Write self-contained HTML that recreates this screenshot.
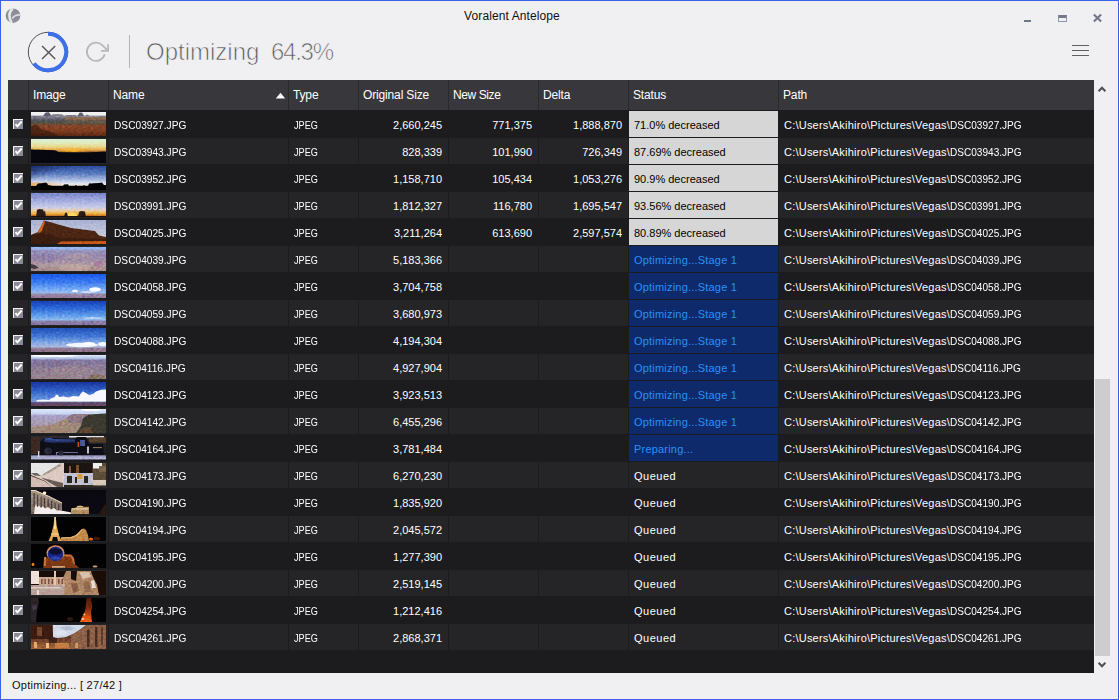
<!DOCTYPE html>
<html><head><meta charset="utf-8"><title>Voralent Antelope</title>
<style>
*{box-sizing:border-box;margin:0;padding:0}
html,body{width:1119px;height:700px;overflow:hidden;background:#f0f0f2;font-family:"Liberation Sans",sans-serif;font-size:12px;color:#000}
#win{position:absolute;left:0;top:0;width:1119px;height:700px;background:#f0f0f2}
#frame{position:absolute;left:0;top:0;width:1119px;height:700px;border:1px solid #3a62e8;pointer-events:none}
#title{position:absolute;left:0;width:1024px;top:9px;text-align:center;font-size:12px;color:#111;letter-spacing:0.1px}
#big{position:absolute;left:146px;top:37.5px;font-size:24px;color:#5a5a5a;white-space:pre;-webkit-text-stroke:0.7px #f0f0f2}
#sep{position:absolute;left:129px;top:35px;width:1px;height:33px;background:#b4b4b4}
#tbl{position:absolute;left:8px;top:80px;width:1086px;height:593px;background:#1c1c1e;overflow:hidden}
.h{position:absolute;left:0;top:0;height:30px;width:1086px;background:#38383c}
.h div{position:absolute;top:0;height:30px;line-height:30px;color:#fff;padding-left:4px;border-left:1px solid #2a2a2d;font-size:12px;letter-spacing:-0.15px;white-space:nowrap}
.r{position:absolute;left:0;width:1086px;height:27px}
.r.a{background:#1c1c1e}
.r.b{background:#252527;box-shadow:inset 0 1px 0 #1c1c1e}
.c{position:absolute;top:0;height:27px;line-height:30px;color:#fff;font-size:11px;white-space:nowrap;overflow:hidden}
.r.b .c{border-left:1px solid #1c1c1e}
.r.a .c{border-left:1px solid #1c1c1e}
.ck{left:0;width:20px;border-left:none!important}
.im{left:20px;width:80px}
.nm{left:100px;width:180px;padding-left:5px}
.nm i{display:inline-block;font-style:normal;transform:scaleX(0.925);transform-origin:0 50%}
.ty{left:280px;width:70px;padding-left:5px}
.ty i{display:inline-block;font-style:normal;transform:scaleX(0.83);transform-origin:0 50%}
.os{left:350px;width:90px;text-align:right;padding-right:6px}
.ns{left:440px;width:90px;text-align:right;padding-right:6px}
.dl{left:530px;width:90px;text-align:right;padding-right:6px}
.st{left:620px;width:150px}
.pa{left:770px;width:316px;padding-left:5px}
.pa b{font-weight:normal;letter-spacing:0.22px}
.pa i{display:inline-block;font-style:normal;transform:scaleX(0.915);transform-origin:0 50%}
.st span{position:absolute;left:0;top:1px;right:0;bottom:0;padding-left:4px;line-height:28px}
.st.done span{background:#d6d6d6;color:#000;padding-left:5px}
.st.run span{background:#0f2a6b;color:#2890f8;letter-spacing:0.2px;padding-left:5px}
.st.q span{color:#fff;letter-spacing:0.5px;padding-left:5px}
.cb{position:absolute;left:5px;top:9px;width:10px;height:10px;background:#8a8a96;border-left:1px solid #f4f4f4;border-top:1px solid #f4f4f4;display:block;line-height:0}
.cb svg{position:absolute;left:-1px;top:-1px}
.th{position:absolute;left:2px;top:2px;width:75px;height:24px;background:#555}
#status{position:absolute;left:12px;top:679px;font-size:11px;color:#111;letter-spacing:0.27px}
#sb{position:absolute;left:1095px;top:379px;width:15px;height:277px;background:#cdcdcd}
</style></head><body>
<svg width="0" height="0" style="position:absolute"><defs><filter id="nz" x="0" y="0" width="100%" height="100%" color-interpolation-filters="sRGB"><feTurbulence type="fractalNoise" baseFrequency="0.35 0.5" numOctaves="2" seed="7" result="t"/><feColorMatrix in="t" type="matrix" values="0.3 0.15 0.05 0 0.25  0.1 0.3 0.1 0 0.25  0.05 0.15 0.3 0 0.25  0 0 0 0 1" result="n"/><feBlend in="n" in2="SourceGraphic" mode="overlay" result="o"/><feComposite in="o" in2="SourceGraphic" operator="in"/></filter></defs></svg>
<div id="win">
<div id="title">Voralent Antelope</div>
<svg id="appicon" width="18" height="18" viewBox="0 0 18 18" style="position:absolute;left:4px;top:7px"><circle cx="9" cy="8.7" r="7.3" fill="#8e8e9a"/><path d="M8.6 1.4 C4.6 5 4.4 11 7.8 16" fill="none" stroke="#e6e6ea" stroke-width="2.7"/><path d="M8.2 11.5 C10 8.8 13 7.6 16.2 7.9" fill="none" stroke="#dcdce0" stroke-width="1.6"/></svg>
<svg id="cancel" width="46" height="46" viewBox="0 0 46 46" style="position:absolute;left:25.4px;top:28.5px"><circle cx="23" cy="23" r="19.7" fill="none" stroke="#555" stroke-width="1"/><path d="M23 4.8 A18.2 18.2 0 1 1 8.85 34.45" fill="none" stroke="#3f6fe8" stroke-width="4"/><path d="M17 16.9 L30.2 30.1 M30.2 16.9 L17 30.1" stroke="#555" stroke-width="1.4" fill="none"/></svg>
<svg id="refresh" width="30" height="30" viewBox="0 0 30 30" style="position:absolute;left:81px;top:37px"><path d="M23.75 17.26 A9.1 9.1 0 1 1 21.43 8.32 L26.6 13.4" fill="none" stroke="#b8b8b8" stroke-width="1.8"/><path d="M27.1 7.2 V13.85 H20" fill="none" stroke="#b8b8b8" stroke-width="1.8"/></svg>
<div style="position:absolute;left:1024px;top:20px;width:7px;height:2px;background:#707888"></div>
<div style="position:absolute;left:1058px;top:15px;width:9px;height:7px;border:1px solid #8c98b0;border-top:3px solid #77778a"></div>
<svg width="11" height="10" viewBox="0 0 11 10" style="position:absolute;left:1092px;top:13px"><path d="M1.9 1.4 L9.1 8.4 M9.1 1.4 L1.9 8.4" stroke="#74748a" stroke-width="2.1" fill="none"/></svg>
<div style="position:absolute;left:1072px;top:45px;width:17px;height:1px;background:#606060"></div>
<div style="position:absolute;left:1072px;top:50px;width:17px;height:1px;background:#606060"></div>
<div style="position:absolute;left:1072px;top:55px;width:17px;height:1px;background:#606060"></div>
<svg width="10" height="8" viewBox="0 0 10 8" style="position:absolute;left:1097px;top:85px"><path d="M1.6 6.3 L5 2.7 L8.4 6.3" stroke="#505050" stroke-width="2" fill="none"/></svg>
<svg width="10" height="8" viewBox="0 0 10 8" style="position:absolute;left:1097px;top:661px"><path d="M1.6 1.7 L5 5.3 L8.4 1.7" stroke="#505050" stroke-width="2" fill="none"/></svg>
<div id="sep"></div>
<div id="big"><span>Optimizing  </span><span style="position:absolute;left:125px;top:0;letter-spacing:-1.25px">64.3%</span></div>
<div id="tbl">
<div class="h"><div style="left:0;width:20px;border:none"></div><div style="left:20px;width:80px">Image</div><div style="left:100px;width:180px">Name</div><div style="left:280px;width:70px">Type</div><div style="left:350px;width:90px">Original Size</div><div style="left:440px;width:90px;letter-spacing:-0.4px">New Size</div><div style="left:530px;width:90px">Delta</div><div style="left:620px;width:150px">Status</div><div style="left:770px;width:316px">Path</div></div>
<svg width="11" height="7" viewBox="0 0 11 7" style="position:absolute;left:267px;top:12px"><polygon points="0.8,6.5 5.5,0.8 10.2,6.5" fill="#fff"/></svg>
<div id="rows" style="position:absolute;left:0;top:30px">
<div class="r a" style="top:0px"><div class="c ck"><span class="cb"><svg viewBox="0 0 11 11" width="11" height="11"><path d="M2.5 5.2 L4.4 7.4 L8.7 2.5" fill="none" stroke="#fff" stroke-width="1.9"/></svg></span></div><div class="c im"><svg class="th" viewBox="0 0 75 24" width="75" height="24"><defs><linearGradient id="g0" x1="0" y1="0" x2="0" y2="1"><stop offset="0" stop-color="#f2f2f2"/><stop offset="0.13" stop-color="#eeeeee"/><stop offset="0.17" stop-color="#8a8898"/><stop offset="0.26" stop-color="#6c6a78"/><stop offset="0.34" stop-color="#54565a"/><stop offset="0.44" stop-color="#505048"/><stop offset="0.5" stop-color="#6a4c38"/><stop offset="0.6" stop-color="#884428"/><stop offset="0.8" stop-color="#7c3c20"/><stop offset="1" stop-color="#5a2814"/></linearGradient></defs><g filter="url(#nz)"><rect x="0" y="0" width="75" height="24" fill="url(#g0)"/><polygon points="12,4 14.5,0.6 18,0.3 20.5,4" fill="#605c6c"/><polygon points="46.5,4 48.5,0.8 51,0.6 53,4" fill="#605c6c"/><polygon points="20,4 22,2.2 31,2.2 33,4" fill="#807c88"/><polygon points="54,4 56,2.4 59,4" fill="#807c88"/><polygon points="34,4 36,3 44,3 46,4" fill="#807c88"/><polygon points="0,14 6,12.5 10,17 20,20 28,24 0,24" fill="#2a140c" opacity="0.55"/><rect x="34" y="5" width="41" height="3.5" fill="#a06838" opacity="0.6"/><rect x="36" y="8.5" width="39" height="2.5" fill="#6a6048" opacity="0.5"/></g></svg></div><div class="c nm"><i>DSC03927.JPG</i></div><div class="c ty"><i>JPEG</i></div><div class="c os">2,660,245</div><div class="c ns">771,375</div><div class="c dl">1,888,870</div><div class="c st done"><span>71.0% decreased</span></div><div class="c pa"><b>C:\Users\Akihiro\Pictures\Vegas\</b><i>DSC03927.JPG</i></div></div>
<div class="r b" style="top:27px"><div class="c ck"><span class="cb"><svg viewBox="0 0 11 11" width="11" height="11"><path d="M2.5 5.2 L4.4 7.4 L8.7 2.5" fill="none" stroke="#fff" stroke-width="1.9"/></svg></span></div><div class="c im"><svg class="th" viewBox="0 0 75 24" width="75" height="24"><defs><linearGradient id="g1" x1="0" y1="0" x2="0" y2="1"><stop offset="0" stop-color="#d8f0d4"/><stop offset="0.15" stop-color="#e0ecc0"/><stop offset="0.32" stop-color="#e8d88c"/><stop offset="0.42" stop-color="#e8b858"/><stop offset="0.5" stop-color="#c88838"/><stop offset="0.56" stop-color="#503828"/><stop offset="0.6" stop-color="#08080f"/><stop offset="1" stop-color="#020206"/></linearGradient><radialGradient id="r1" cx="0.5" cy="0.5" r="0.5"><stop offset="0" stop-color="#ffb428"/><stop offset="1" stop-color="#ffb428" stop-opacity="0"/></radialGradient></defs><g filter="url(#nz)"><rect x="0" y="0" width="75" height="24" fill="url(#g1)"/><ellipse cx="42" cy="11.5" rx="17" ry="3" fill="url(#r1)"/><polygon points="0,10.5 10,10.8 24,11.3 28,13.3 56,13.5 75,12.5 75,24 0,24" fill="#07070f"/></g></svg></div><div class="c nm"><i>DSC03943.JPG</i></div><div class="c ty"><i>JPEG</i></div><div class="c os">828,339</div><div class="c ns">101,990</div><div class="c dl">726,349</div><div class="c st done"><span>87.69% decreased</span></div><div class="c pa"><b>C:\Users\Akihiro\Pictures\Vegas\</b><i>DSC03943.JPG</i></div></div>
<div class="r a" style="top:54px"><div class="c ck"><span class="cb"><svg viewBox="0 0 11 11" width="11" height="11"><path d="M2.5 5.2 L4.4 7.4 L8.7 2.5" fill="none" stroke="#fff" stroke-width="1.9"/></svg></span></div><div class="c im"><svg class="th" viewBox="0 0 75 24" width="75" height="24"><defs><linearGradient id="g2" x1="0" y1="0" x2="0" y2="1"><stop offset="0" stop-color="#2c4c9e"/><stop offset="0.3" stop-color="#5678bc"/><stop offset="0.55" stop-color="#a0b4dc"/><stop offset="0.72" stop-color="#dfe4f0"/><stop offset="0.8" stop-color="#efe4d4"/><stop offset="0.85" stop-color="#000"/><stop offset="1" stop-color="#000"/></linearGradient><linearGradient id="g2b" x1="0" y1="0" x2="1" y2="0.7"><stop offset="0" stop-color="#10184aaa"/><stop offset="0.4" stop-color="#10184a00"/></linearGradient><linearGradient id="g2c" x1="0" y1="0" x2="1" y2="0"><stop offset="0" stop-color="#e8a050"/><stop offset="1" stop-color="#e8a05000"/></linearGradient></defs><g filter="url(#nz)"><rect x="0" y="0" width="75" height="24" fill="url(#g2)"/><rect x="0" y="0" width="75" height="18" fill="url(#g2b)"/><rect x="0" y="16.5" width="32" height="3.5" fill="url(#g2c)" opacity="0.8"/><polygon points="0,20 5,20 7,17.5 13,17 14,16.5 16,17 17,19 22,20 32,20 33,18.5 37,18.3 38,20 44,20 45,19 46,20 52,20 53,19 54,20 57,20 58,17.5 68,17 71,16.5 73,19 75,19 75,24 0,24" fill="#000"/></g></svg></div><div class="c nm"><i>DSC03952.JPG</i></div><div class="c ty"><i>JPEG</i></div><div class="c os">1,158,710</div><div class="c ns">105,434</div><div class="c dl">1,053,276</div><div class="c st done"><span>90.9% decreased</span></div><div class="c pa"><b>C:\Users\Akihiro\Pictures\Vegas\</b><i>DSC03952.JPG</i></div></div>
<div class="r b" style="top:81px"><div class="c ck"><span class="cb"><svg viewBox="0 0 11 11" width="11" height="11"><path d="M2.5 5.2 L4.4 7.4 L8.7 2.5" fill="none" stroke="#fff" stroke-width="1.9"/></svg></span></div><div class="c im"><svg class="th" viewBox="0 0 75 24" width="75" height="24"><defs><linearGradient id="g3" x1="0" y1="0" x2="0" y2="1"><stop offset="0" stop-color="#7884c8"/><stop offset="0.35" stop-color="#a8b0e0"/><stop offset="0.6" stop-color="#c8cce8"/><stop offset="0.72" stop-color="#e8d0b0"/><stop offset="0.86" stop-color="#f0b040"/><stop offset="0.95" stop-color="#c07020"/><stop offset="1" stop-color="#301810"/></linearGradient></defs><g filter="url(#nz)"><rect x="0" y="0" width="75" height="24" fill="url(#g3)"/><ellipse cx="40" cy="22" rx="6" ry="2.5" fill="#ffd860"/><polygon points="5,24 6,17 8,16 12,16.5 13,19 14,17.5 15,24" fill="#2a1a18"/><polygon points="33,24 34,20 36,19.5 37,24" fill="#2a1a18"/><polygon points="47,24 48,19 50,18 54,18.5 55,24" fill="#2a1a18"/><rect x="0" y="23" width="75" height="1" fill="#20100c"/></g></svg></div><div class="c nm"><i>DSC03991.JPG</i></div><div class="c ty"><i>JPEG</i></div><div class="c os">1,812,327</div><div class="c ns">116,780</div><div class="c dl">1,695,547</div><div class="c st done"><span>93.56% decreased</span></div><div class="c pa"><b>C:\Users\Akihiro\Pictures\Vegas\</b><i>DSC03991.JPG</i></div></div>
<div class="r a" style="top:108px"><div class="c ck"><span class="cb"><svg viewBox="0 0 11 11" width="11" height="11"><path d="M2.5 5.2 L4.4 7.4 L8.7 2.5" fill="none" stroke="#fff" stroke-width="1.9"/></svg></span></div><div class="c im"><svg class="th" viewBox="0 0 75 24" width="75" height="24"><defs><linearGradient id="g4" x1="0" y1="0" x2="0" y2="1"><stop offset="0" stop-color="#a8b0d4"/><stop offset="1" stop-color="#d8d8e0"/></linearGradient></defs><g filter="url(#nz)"><rect x="0" y="0" width="75" height="24" fill="url(#g4)"/><polygon points="0,15 7,12 13,0.5 15,1 40,8 64,11 68,15.5 75,17 75,24 0,24" fill="#4c2614"/><polygon points="7,12 13,0.5 14,2 11,11 8,13" fill="#d0601c"/><polygon points="0,15 12,13 30,18 75,19 75,24 0,24" fill="#2e160c" opacity="0.55"/><polygon points="26,24 30,21.5 75,21 75,24" fill="#c85818"/></g></svg></div><div class="c nm"><i>DSC04025.JPG</i></div><div class="c ty"><i>JPEG</i></div><div class="c os">3,211,264</div><div class="c ns">613,690</div><div class="c dl">2,597,574</div><div class="c st done"><span>80.89% decreased</span></div><div class="c pa"><b>C:\Users\Akihiro\Pictures\Vegas\</b><i>DSC04025.JPG</i></div></div>
<div class="r b" style="top:135px"><div class="c ck"><span class="cb"><svg viewBox="0 0 11 11" width="11" height="11"><path d="M2.5 5.2 L4.4 7.4 L8.7 2.5" fill="none" stroke="#fff" stroke-width="1.9"/></svg></span></div><div class="c im"><svg class="th" viewBox="0 0 75 24" width="75" height="24"><defs><linearGradient id="g5" x1="0" y1="0" x2="0" y2="1"><stop offset="0" stop-color="#8cb4f4"/><stop offset="0.08" stop-color="#9cb4ec"/><stop offset="0.16" stop-color="#9490b8"/><stop offset="0.45" stop-color="#9888a8"/><stop offset="0.75" stop-color="#b09aa0"/><stop offset="1" stop-color="#a48a88"/></linearGradient></defs><g filter="url(#nz)"><rect x="0" y="0" width="75" height="24" fill="url(#g5)"/><ellipse cx="44" cy="21" rx="16" ry="4" fill="#c4aca4" opacity="0.6"/><ellipse cx="14" cy="11" rx="12" ry="5" fill="#8474a4" opacity="0.4"/><ellipse cx="48" cy="9" rx="14" ry="3" fill="#c4a8a8" opacity="0.35"/><ellipse cx="68" cy="17" rx="5" ry="3" fill="#a85c98" opacity="0.4"/><polygon points="0,17 4,18 8,21 3,22 0,21" fill="#18101c" opacity="0.7"/></g></svg></div><div class="c nm"><i>DSC04039.JPG</i></div><div class="c ty"><i>JPEG</i></div><div class="c os">5,183,366</div><div class="c ns"></div><div class="c dl"></div><div class="c st run"><span>Optimizing...Stage 1</span></div><div class="c pa"><b>C:\Users\Akihiro\Pictures\Vegas\</b><i>DSC04039.JPG</i></div></div>
<div class="r a" style="top:162px"><div class="c ck"><span class="cb"><svg viewBox="0 0 11 11" width="11" height="11"><path d="M2.5 5.2 L4.4 7.4 L8.7 2.5" fill="none" stroke="#fff" stroke-width="1.9"/></svg></span></div><div class="c im"><svg class="th" viewBox="0 0 75 24" width="75" height="24"><defs><linearGradient id="g6" x1="0" y1="0" x2="0" y2="1"><stop offset="0" stop-color="#1858ec"/><stop offset="0.35" stop-color="#3c7cf0"/><stop offset="0.65" stop-color="#78acf4"/><stop offset="0.78" stop-color="#98b8ec"/><stop offset="0.84" stop-color="#9888a8"/><stop offset="1" stop-color="#907898"/></linearGradient></defs><g filter="url(#nz)"><rect x="0" y="0" width="75" height="24" fill="url(#g6)"/><ellipse cx="64" cy="15.5" rx="6" ry="2.2" fill="#fff"/><ellipse cx="44" cy="17" rx="3" ry="1.2" fill="#f0f4ff"/><ellipse cx="57" cy="18" rx="8" ry="1.2" fill="#e0e8f8" opacity="0.7"/></g></svg></div><div class="c nm"><i>DSC04058.JPG</i></div><div class="c ty"><i>JPEG</i></div><div class="c os">3,704,758</div><div class="c ns"></div><div class="c dl"></div><div class="c st run"><span>Optimizing...Stage 1</span></div><div class="c pa"><b>C:\Users\Akihiro\Pictures\Vegas\</b><i>DSC04058.JPG</i></div></div>
<div class="r b" style="top:189px"><div class="c ck"><span class="cb"><svg viewBox="0 0 11 11" width="11" height="11"><path d="M2.5 5.2 L4.4 7.4 L8.7 2.5" fill="none" stroke="#fff" stroke-width="1.9"/></svg></span></div><div class="c im"><svg class="th" viewBox="0 0 75 24" width="75" height="24"><defs><linearGradient id="g7" x1="0" y1="0" x2="0" y2="1"><stop offset="0" stop-color="#1840b8"/><stop offset="0.3" stop-color="#2c68d8"/><stop offset="0.65" stop-color="#68a4ec"/><stop offset="0.78" stop-color="#90b8ec"/><stop offset="0.85" stop-color="#8880a8"/><stop offset="1" stop-color="#8874a0"/></linearGradient></defs><g filter="url(#nz)"><rect x="0" y="0" width="75" height="24" fill="url(#g7)"/><ellipse cx="62" cy="17" rx="10" ry="1" fill="#d8e4f8" opacity="0.6"/></g></svg></div><div class="c nm"><i>DSC04059.JPG</i></div><div class="c ty"><i>JPEG</i></div><div class="c os">3,680,973</div><div class="c ns"></div><div class="c dl"></div><div class="c st run"><span>Optimizing...Stage 1</span></div><div class="c pa"><b>C:\Users\Akihiro\Pictures\Vegas\</b><i>DSC04059.JPG</i></div></div>
<div class="r a" style="top:216px"><div class="c ck"><span class="cb"><svg viewBox="0 0 11 11" width="11" height="11"><path d="M2.5 5.2 L4.4 7.4 L8.7 2.5" fill="none" stroke="#fff" stroke-width="1.9"/></svg></span></div><div class="c im"><svg class="th" viewBox="0 0 75 24" width="75" height="24"><defs><linearGradient id="g8" x1="0" y1="0" x2="0" y2="1"><stop offset="0" stop-color="#2050b8"/><stop offset="0.35" stop-color="#4478d4"/><stop offset="0.6" stop-color="#80a8e4"/><stop offset="0.78" stop-color="#a8b8e0"/><stop offset="0.86" stop-color="#907890"/><stop offset="1" stop-color="#8c7088"/></linearGradient></defs><g filter="url(#nz)"><rect x="0" y="0" width="75" height="24" fill="url(#g8)"/><ellipse cx="51" cy="17" rx="16" ry="2.2" fill="#f4f6ff"/><ellipse cx="58" cy="15.5" rx="6" ry="1.5" fill="#fff"/><ellipse cx="72" cy="16" rx="5" ry="2" fill="#f4f6ff"/></g></svg></div><div class="c nm"><i>DSC04088.JPG</i></div><div class="c ty"><i>JPEG</i></div><div class="c os">4,194,304</div><div class="c ns"></div><div class="c dl"></div><div class="c st run"><span>Optimizing...Stage 1</span></div><div class="c pa"><b>C:\Users\Akihiro\Pictures\Vegas\</b><i>DSC04088.JPG</i></div></div>
<div class="r b" style="top:243px"><div class="c ck"><span class="cb"><svg viewBox="0 0 11 11" width="11" height="11"><path d="M2.5 5.2 L4.4 7.4 L8.7 2.5" fill="none" stroke="#fff" stroke-width="1.9"/></svg></span></div><div class="c im"><svg class="th" viewBox="0 0 75 24" width="75" height="24"><defs><linearGradient id="g9" x1="0" y1="0" x2="0" y2="1"><stop offset="0" stop-color="#e0e8f6"/><stop offset="0.08" stop-color="#c8d6f0"/><stop offset="0.16" stop-color="#a8b8e0"/><stop offset="0.21" stop-color="#8478a0"/><stop offset="0.5" stop-color="#8c7c98"/><stop offset="1" stop-color="#98848c"/></linearGradient></defs><g filter="url(#nz)"><rect x="0" y="0" width="75" height="24" fill="url(#g9)"/><ellipse cx="22" cy="0.8" rx="24" ry="1.3" fill="#fff" opacity="0.85"/><ellipse cx="40" cy="15" rx="22" ry="4" fill="#a89090" opacity="0.35"/><ellipse cx="20" cy="9" rx="18" ry="3" fill="#706088" opacity="0.3"/><ellipse cx="66" cy="22.5" rx="8" ry="3" fill="#7c6c50" opacity="0.7"/></g></svg></div><div class="c nm"><i>DSC04116.JPG</i></div><div class="c ty"><i>JPEG</i></div><div class="c os">4,927,904</div><div class="c ns"></div><div class="c dl"></div><div class="c st run"><span>Optimizing...Stage 1</span></div><div class="c pa"><b>C:\Users\Akihiro\Pictures\Vegas\</b><i>DSC04116.JPG</i></div></div>
<div class="r a" style="top:270px"><div class="c ck"><span class="cb"><svg viewBox="0 0 11 11" width="11" height="11"><path d="M2.5 5.2 L4.4 7.4 L8.7 2.5" fill="none" stroke="#fff" stroke-width="1.9"/></svg></span></div><div class="c im"><svg class="th" viewBox="0 0 75 24" width="75" height="24"><defs><linearGradient id="g10" x1="0" y1="0" x2="0" y2="1"><stop offset="0" stop-color="#1834a0"/><stop offset="0.4" stop-color="#3464c8"/><stop offset="0.75" stop-color="#6c98e0"/><stop offset="0.83" stop-color="#8090c0"/><stop offset="0.86" stop-color="#5c4868"/><stop offset="1" stop-color="#684864"/></linearGradient></defs><g filter="url(#nz)"><rect x="0" y="0" width="75" height="24" fill="url(#g10)"/><polygon points="5,19.5 6,18 12,17.5 18,18 20,16.5 24,15 25,12.5 27,13 28,15 32,14.5 38,15.5 42,14 48,14.5 50,11 52,9.5 55,11 58,13 62,12 65,9.5 70,7.8 75,7.5 75,19.5" fill="#f8f8ff"/></g></svg></div><div class="c nm"><i>DSC04123.JPG</i></div><div class="c ty"><i>JPEG</i></div><div class="c os">3,923,513</div><div class="c ns"></div><div class="c dl"></div><div class="c st run"><span>Optimizing...Stage 1</span></div><div class="c pa"><b>C:\Users\Akihiro\Pictures\Vegas\</b><i>DSC04123.JPG</i></div></div>
<div class="r b" style="top:297px"><div class="c ck"><span class="cb"><svg viewBox="0 0 11 11" width="11" height="11"><path d="M2.5 5.2 L4.4 7.4 L8.7 2.5" fill="none" stroke="#fff" stroke-width="1.9"/></svg></span></div><div class="c im"><svg class="th" viewBox="0 0 75 24" width="75" height="24"><defs><linearGradient id="g11" x1="0" y1="0" x2="0" y2="1"><stop offset="0" stop-color="#dce8fa"/><stop offset="0.2" stop-color="#c8d4f0"/><stop offset="0.27" stop-color="#a8a0c8"/><stop offset="0.6" stop-color="#a89cb0"/><stop offset="1" stop-color="#a08878"/></linearGradient></defs><g filter="url(#nz)"><rect x="0" y="0" width="75" height="24" fill="url(#g11)"/><ellipse cx="60" cy="0.8" rx="10" ry="1.3" fill="#fff"/><polygon points="0,19 20,16 34,10 40,6 58,5 60,24 0,24" fill="#a08878"/><polygon points="36,9 42,5 56,5 52,14 38,14" fill="#8a7488" opacity="0.8"/><polygon points="45,24 50,17 52,9 58,5.5 75,4.5 75,24" fill="#3c3a30"/><polygon points="48,24 52,19 60,18 62,24" fill="#705038" opacity="0.7"/></g></svg></div><div class="c nm"><i>DSC04142.JPG</i></div><div class="c ty"><i>JPEG</i></div><div class="c os">6,455,296</div><div class="c ns"></div><div class="c dl"></div><div class="c st run"><span>Optimizing...Stage 1</span></div><div class="c pa"><b>C:\Users\Akihiro\Pictures\Vegas\</b><i>DSC04142.JPG</i></div></div>
<div class="r a" style="top:324px"><div class="c ck"><span class="cb"><svg viewBox="0 0 11 11" width="11" height="11"><path d="M2.5 5.2 L4.4 7.4 L8.7 2.5" fill="none" stroke="#fff" stroke-width="1.9"/></svg></span></div><div class="c im"><svg class="th" viewBox="0 0 75 24" width="75" height="24"><defs><linearGradient id="g12" x1="0" y1="0" x2="0" y2="1"><stop offset="0" stop-color="#2c2830"/><stop offset="0.78" stop-color="#1c1a22"/><stop offset="0.83" stop-color="#9c9cc0"/><stop offset="0.94" stop-color="#b4b4d4"/><stop offset="1" stop-color="#303040"/></linearGradient><linearGradient id="g12b" x1="0" y1="0" x2="0" y2="1"><stop offset="0" stop-color="#4468c0"/><stop offset="1" stop-color="#1c2450"/></linearGradient></defs><g filter="url(#nz)"><rect x="0" y="0" width="75" height="24" fill="url(#g12)"/><rect x="38" y="0" width="35" height="1.5" fill="#e4e4ec"/><rect x="58" y="1.5" width="17" height="5" fill="#54402c"/><rect x="0" y="1" width="9" height="17" fill="#3c2a22"/><polygon points="9,19 9,6 12,3 20,2 44,3 46,1 55,1 58,8 72,8 73,19" fill="#0e0e16"/><polygon points="13,6 14,2.5 21,1.8 22,3 44,3.5 44,6.5 22,7" fill="url(#g12b)" opacity="0.9"/><rect x="46.5" y="6" width="1.8" height="5" fill="#c04818"/><rect x="49" y="4" width="5" height="6" fill="#5868b0" opacity="0.8"/><rect x="56.2" y="10.5" width="1.6" height="7" fill="#ececf4"/><rect x="62" y="11.2" width="9" height="0.9" fill="#a89060"/><rect x="7" y="15" width="1.3" height="6" fill="#d8d8e8"/><rect x="25" y="16" width="22" height="0.9" fill="#7c7ca4"/><rect x="25" y="16" width="0.9" height="4" fill="#7c7ca4"/><ellipse cx="17" cy="15" rx="4" ry="3.5" fill="#282838"/><ellipse cx="30" cy="17" rx="2.5" ry="2.5" fill="#282838"/></g></svg></div><div class="c nm"><i>DSC04164.JPG</i></div><div class="c ty"><i>JPEG</i></div><div class="c os">3,781,484</div><div class="c ns"></div><div class="c dl"></div><div class="c st run"><span>Preparing...</span></div><div class="c pa"><b>C:\Users\Akihiro\Pictures\Vegas\</b><i>DSC04164.JPG</i></div></div>
<div class="r b" style="top:351px"><div class="c ck"><span class="cb"><svg viewBox="0 0 11 11" width="11" height="11"><path d="M2.5 5.2 L4.4 7.4 L8.7 2.5" fill="none" stroke="#fff" stroke-width="1.9"/></svg></span></div><div class="c im"><svg class="th" viewBox="0 0 75 24" width="75" height="24"><defs></defs><g filter="url(#nz)"><rect x="0" y="0" width="75" height="24" fill="#3a3028"/><polygon points="0,0 30,0 10,13 0,11" fill="#e6e6e6"/><polygon points="30,0 33,0 33,24 21,24 14,18 0,12 0,10.5 10,13" fill="#dccac2"/><polygon points="0,13 14,18.5 21,24 0,24" fill="#d4bcb4"/><polygon points="0,10 6,10 10,13 4,12.5" fill="#4a4048" opacity="0.8"/><polygon points="10,14.5 32,20 32,24 26,24" fill="#2a201c" opacity="0.65"/><polygon points="12,11 30,1 30,3 14,12" fill="#8a7468" opacity="0.6"/><rect x="33" y="0" width="28" height="10" fill="#1c1410"/><rect x="45" y="2" width="3" height="8" fill="#7c4c28"/><rect x="38" y="3" width="2" height="7" fill="#7c5c40"/><rect x="33" y="10" width="29" height="12" fill="#c0c0d0"/><rect x="36" y="13" width="5" height="7" fill="#2c2420"/><rect x="44" y="14" width="2" height="6" fill="#2c2420"/><rect x="53" y="13" width="4" height="7" fill="#2c2420"/><rect x="46.5" y="11" width="5" height="5" fill="#d8a040"/><rect x="62" y="0" width="13" height="17" fill="#5c4c38"/><rect x="62" y="0" width="9" height="5.5" fill="#f0f0f0"/><rect x="68" y="3" width="7" height="6" fill="#7c6850"/><rect x="62" y="17" width="13" height="6" fill="#d8c8b8"/><rect x="33" y="22" width="42" height="2" fill="#2c2420" opacity="0.6"/></g></svg></div><div class="c nm"><i>DSC04173.JPG</i></div><div class="c ty"><i>JPEG</i></div><div class="c os">6,270,230</div><div class="c ns"></div><div class="c dl"></div><div class="c st q"><span>Queued</span></div><div class="c pa"><b>C:\Users\Akihiro\Pictures\Vegas\</b><i>DSC04173.JPG</i></div></div>
<div class="r a" style="top:378px"><div class="c ck"><span class="cb"><svg viewBox="0 0 11 11" width="11" height="11"><path d="M2.5 5.2 L4.4 7.4 L8.7 2.5" fill="none" stroke="#fff" stroke-width="1.9"/></svg></span></div><div class="c im"><svg class="th" viewBox="0 0 75 24" width="75" height="24"><defs><linearGradient id="g14" x1="0" y1="0" x2="0" y2="1"><stop offset="0" stop-color="#0a0810"/><stop offset="1" stop-color="#0c0a12"/></linearGradient><linearGradient id="g14b" x1="0" y1="0" x2="0" y2="1"><stop offset="0" stop-color="#a89888"/><stop offset="1" stop-color="#786860"/></linearGradient></defs><g filter="url(#nz)"><rect x="0" y="0" width="75" height="24" fill="url(#g14)"/><polygon points="0,0 4,0 18,6 31,12.5 31,24 0,24" fill="url(#g14b)"/><polygon points="0,0 4,0 18,6 31,12.5 31,13.5 18,7 4,1 0,1" fill="#e8d8c0"/><rect x="2.5" y="3" width="1.2" height="14" fill="#4a3c38"/><rect x="6" y="5" width="1.2" height="12" fill="#4a3c38"/><rect x="9.5" y="6.5" width="1.2" height="11" fill="#4a3c38"/><rect x="13" y="8" width="1.2" height="10" fill="#4a3c38"/><rect x="16.5" y="9.5" width="1.2" height="9" fill="#4a3c38"/><rect x="20" y="11" width="1.2" height="8" fill="#4a3c38"/><rect x="23.5" y="12.5" width="1.2" height="7" fill="#4a3c38"/><rect x="27" y="14" width="1.2" height="6" fill="#4a3c38"/><ellipse cx="13.5" cy="3" rx="1.8" ry="1.4" fill="#fff0d0"/><polygon points="3,24 4,17 5,14 6,17 8,15.5 10,18 12,16 14,18.5 17,17 20,19.5 23,18 26,20.5 30,20.5 38,22 46,24" fill="#f4ecec"/><polygon points="40,24 40,18.5 45,17.5 47,15.8 50,15.5 52,16.8 58,16.8 58,24" fill="#b08c60"/><rect x="41" y="18.5" width="16" height="0.9" fill="#fff0c0"/><rect x="46" y="16.2" width="6" height="0.8" fill="#e8c890"/><polygon points="68,24 75,13 75,24" fill="#2a1810"/></g></svg></div><div class="c nm"><i>DSC04190.JPG</i></div><div class="c ty"><i>JPEG</i></div><div class="c os">1,835,920</div><div class="c ns"></div><div class="c dl"></div><div class="c st q"><span>Queued</span></div><div class="c pa"><b>C:\Users\Akihiro\Pictures\Vegas\</b><i>DSC04190.JPG</i></div></div>
<div class="r b" style="top:405px"><div class="c ck"><span class="cb"><svg viewBox="0 0 11 11" width="11" height="11"><path d="M2.5 5.2 L4.4 7.4 L8.7 2.5" fill="none" stroke="#fff" stroke-width="1.9"/></svg></span></div><div class="c im"><svg class="th" viewBox="0 0 75 24" width="75" height="24"><defs></defs><g filter="url(#nz)"><rect x="0" y="0" width="75" height="24" fill="#020202"/><polygon points="23.4,0 24.8,0 25.6,8 27,14 27.5,17 30.5,24 17.5,24 20.5,17 21,14 22.6,8" fill="#e0a858"/><polygon points="23.7,0 24.5,0 25.2,12 23,12" fill="#f8dc98"/><polygon points="22,20 26,20 27,24 21,24" fill="#020202"/><rect x="20" y="16.5" width="8" height="1" fill="#f8dc98"/><polygon points="30,24 30,20.5 40,20 45,18 49,14 51,12 53,11.5 55,13 57,18 58,24" fill="#c08848"/><polygon points="30,20.5 40,20 45,18 49,14 51,12 51.6,12.8 49.6,15 45.5,19 40,21 30,21.5" fill="#e8c080"/><ellipse cx="60" cy="22" rx="2" ry="1.6" fill="#f07010"/><ellipse cx="66" cy="21.5" rx="3" ry="1.8" fill="#702808" opacity="0.6"/></g></svg></div><div class="c nm"><i>DSC04194.JPG</i></div><div class="c ty"><i>JPEG</i></div><div class="c os">2,045,572</div><div class="c ns"></div><div class="c dl"></div><div class="c st q"><span>Queued</span></div><div class="c pa"><b>C:\Users\Akihiro\Pictures\Vegas\</b><i>DSC04194.JPG</i></div></div>
<div class="r a" style="top:432px"><div class="c ck"><span class="cb"><svg viewBox="0 0 11 11" width="11" height="11"><path d="M2.5 5.2 L4.4 7.4 L8.7 2.5" fill="none" stroke="#fff" stroke-width="1.9"/></svg></span></div><div class="c im"><svg class="th" viewBox="0 0 75 24" width="75" height="24"><defs></defs><g filter="url(#nz)"><rect x="0" y="0" width="75" height="24" fill="#030202"/><polygon points="12,24 13,14 18,13 33,11 42,13 44,20 48,24" fill="#7c3814"/><polygon points="32,10.5 40,10.5 43,14 44,20 42.5,20 40,13 32,12" fill="#c87038"/><rect x="13" y="13" width="2" height="9" fill="#c87038"/><ellipse cx="24.5" cy="9" rx="9" ry="7.8" fill="#d89060"/><ellipse cx="24.5" cy="10" rx="7.8" ry="7.2" fill="#1a2888"/><ellipse cx="24.5" cy="7.5" rx="6.6" ry="3.2" fill="#0c1030"/><ellipse cx="24.5" cy="14" rx="5" ry="1.5" fill="#3850c0" opacity="0.7"/><rect x="21" y="22.3" width="13" height="1.2" fill="#f0d8b0"/><ellipse cx="2" cy="20.5" rx="1.4" ry="1.4" fill="#f08020"/><ellipse cx="64" cy="22.5" rx="2.5" ry="0.9" fill="#c8a080"/></g></svg></div><div class="c nm"><i>DSC04195.JPG</i></div><div class="c ty"><i>JPEG</i></div><div class="c os">1,277,390</div><div class="c ns"></div><div class="c dl"></div><div class="c st q"><span>Queued</span></div><div class="c pa"><b>C:\Users\Akihiro\Pictures\Vegas\</b><i>DSC04195.JPG</i></div></div>
<div class="r b" style="top:459px"><div class="c ck"><span class="cb"><svg viewBox="0 0 11 11" width="11" height="11"><path d="M2.5 5.2 L4.4 7.4 L8.7 2.5" fill="none" stroke="#fff" stroke-width="1.9"/></svg></span></div><div class="c im"><svg class="th" viewBox="0 0 75 24" width="75" height="24"><defs></defs><g filter="url(#nz)"><rect x="0" y="0" width="75" height="24" fill="#1a0c08"/><rect x="0" y="0" width="8" height="13" fill="#f0e0d8"/><rect x="8" y="6" width="30" height="8.5" fill="#c8a48c"/><rect x="10" y="8" width="1.5" height="5" fill="#7c5040"/><rect x="13.5" y="8" width="1.5" height="5" fill="#7c5040"/><rect x="17" y="8" width="1.5" height="5" fill="#7c5040"/><rect x="20.5" y="8" width="1.5" height="5" fill="#7c5040"/><rect x="27" y="8" width="1.5" height="5" fill="#7c5040"/><rect x="30.5" y="8" width="1.5" height="5" fill="#7c5040"/><rect x="23" y="0" width="2" height="14" fill="#e0c4b0"/><rect x="0" y="14" width="36" height="10" fill="#b8a098"/><rect x="0" y="16" width="30" height="1.5" fill="#dcccc4"/><rect x="6" y="19" width="2" height="5" fill="#e8dcd8"/><polygon points="33,24 34,14 32,7 35,0 40,0 40,8 45,10 46,0 60,0 62,6 66,14 68,24" fill="#b08868"/><polygon points="48,1 58,1 60,6 52,8" fill="#d8c0a8"/><polygon points="60,10 63,9 65,17 61,17" fill="#e8dcd4"/><polygon points="40,12 46,12 48,20 42,22" fill="#6a3c24" opacity="0.55"/><polygon points="52,12 58,10 60,20 54,22" fill="#6a3c24" opacity="0.4"/></g></svg></div><div class="c nm"><i>DSC04200.JPG</i></div><div class="c ty"><i>JPEG</i></div><div class="c os">2,519,145</div><div class="c ns"></div><div class="c dl"></div><div class="c st q"><span>Queued</span></div><div class="c pa"><b>C:\Users\Akihiro\Pictures\Vegas\</b><i>DSC04200.JPG</i></div></div>
<div class="r a" style="top:486px"><div class="c ck"><span class="cb"><svg viewBox="0 0 11 11" width="11" height="11"><path d="M2.5 5.2 L4.4 7.4 L8.7 2.5" fill="none" stroke="#fff" stroke-width="1.9"/></svg></span></div><div class="c im"><svg class="th" viewBox="0 0 75 24" width="75" height="24"><defs><linearGradient id="r18" x1="0" y1="0" x2="0" y2="1"><stop offset="0" stop-color="#501806"/><stop offset="0.5" stop-color="#8c300c"/><stop offset="0.8" stop-color="#e05010"/><stop offset="1" stop-color="#f06818"/></linearGradient></defs><g filter="url(#nz)"><rect x="0" y="0" width="75" height="24" fill="#020101"/><polygon points="0,0 7,0 8,4 6,12 5,24 0,24" fill="#2c2428"/><polygon points="1,8 5,6 6,10 2,13" fill="#5c5464" opacity="0.5"/><polygon points="49,24 51,19 54,13 55,6 55.5,0 60,0 61,8 60,15 61,24" fill="url(#r18)"/><ellipse cx="52" cy="21" rx="1.4" ry="1.1" fill="#ffd0a0"/><ellipse cx="53.5" cy="16.5" rx="1" ry="0.9" fill="#ffc080"/><ellipse cx="39" cy="21" rx="3" ry="2" fill="#30180c"/></g></svg></div><div class="c nm"><i>DSC04254.JPG</i></div><div class="c ty"><i>JPEG</i></div><div class="c os">1,212,416</div><div class="c ns"></div><div class="c dl"></div><div class="c st q"><span>Queued</span></div><div class="c pa"><b>C:\Users\Akihiro\Pictures\Vegas\</b><i>DSC04254.JPG</i></div></div>
<div class="r b" style="top:513px"><div class="c ck"><span class="cb"><svg viewBox="0 0 11 11" width="11" height="11"><path d="M2.5 5.2 L4.4 7.4 L8.7 2.5" fill="none" stroke="#fff" stroke-width="1.9"/></svg></span></div><div class="c im"><svg class="th" viewBox="0 0 75 24" width="75" height="24"><defs><linearGradient id="g19" x1="0" y1="0" x2="0" y2="1"><stop offset="0" stop-color="#5a3222"/><stop offset="0.6" stop-color="#6c3e2a"/><stop offset="1" stop-color="#a8683c"/></linearGradient></defs><g filter="url(#nz)"><rect x="0" y="0" width="75" height="24" fill="url(#g19)"/><polygon points="21.5,0 55,0 50,4 42,9 34,12.3 26,13 22,12" fill="#d0d8e8"/><polygon points="28,2 40,1 44,4 34,6" fill="#a0a8c0" opacity="0.5"/><polygon points="24,6 34,5 36,9 26,11" fill="#e8ecf4" opacity="0.6"/><polygon points="55,0 75,0 75,24 40,24 40,10.5 48,5.5" fill="#8c6048"/><polygon points="56,5 58.5,4 58.5,22 56,22" fill="#4c2c1e"/><polygon points="64,2 66.5,2 66.5,22 64,22" fill="#4c2c1e"/><polygon points="70,2 72,2 72,20 70,20" fill="#4c2c1e" opacity="0.7"/><polygon points="0,0 21.5,0 22,12 18,14 0,14" fill="#3c1c12"/><rect x="6" y="2" width="5" height="9" fill="#8c5838" opacity="0.7"/><rect x="3" y="17" width="3" height="6" fill="#e8a860"/><rect x="15" y="18" width="3" height="5" fill="#f0c080"/><rect x="24" y="18" width="14" height="5" fill="#d08848" opacity="0.8"/><polygon points="18,12 26,13 26,18 18,18" fill="#2c160e" opacity="0.7"/><rect x="44" y="18" width="3" height="5" fill="#e0a060" opacity="0.8"/></g></svg></div><div class="c nm"><i>DSC04261.JPG</i></div><div class="c ty"><i>JPEG</i></div><div class="c os">2,868,371</div><div class="c ns"></div><div class="c dl"></div><div class="c st q"><span>Queued</span></div><div class="c pa"><b>C:\Users\Akihiro\Pictures\Vegas\</b><i>DSC04261.JPG</i></div></div>
</div>
</div>
<div id="sb"></div>
<div id="status">Optimizing... [ 27/42 ]</div>
<div id="frame"></div>
</div>
</body></html>
